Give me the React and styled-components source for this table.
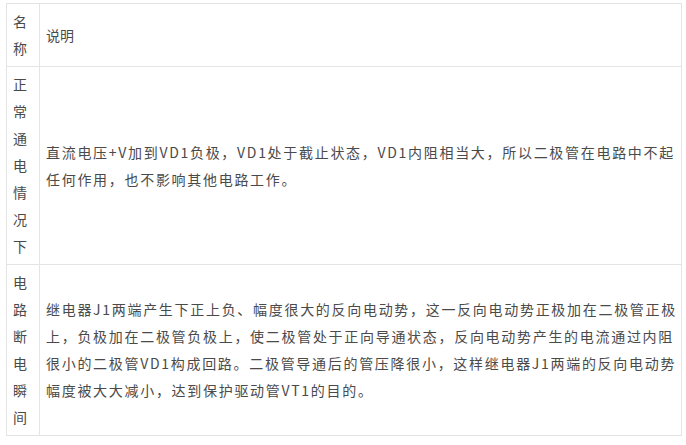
import React from 'react';
import styled, { createGlobalStyle } from 'styled-components';

const GlobalStyle = createGlobalStyle`
  html, body {
    margin: 0;
    padding: 0;
    background: #ffffff;
  }
`;

const Page = styled.div`
  width: 686px;
  height: 445px;
  padding: 3px 0 0 6px;
  box-sizing: border-box;
  background: #ffffff;
  font-family: "Noto Sans CJK SC", "Noto Sans", sans-serif;
  color: #4a4a4a;
`;

const Table = styled.table`
  width: 676px;
  border-collapse: collapse;
  table-layout: fixed;
`;

const NameCell = styled.td`
  width: 33px;
  box-sizing: border-box;
  padding: 4px 9px 4px 6px;
  border: 1px solid #e4e4e4;
  font-size: 14px;
  line-height: 27px;
  word-break: break-all;
  vertical-align: middle;
`;

const DescCell = styled.td`
  padding: 4px 4px 4px 6px;
  border: 1px solid #e4e4e4;
  font-size: 14px;
  line-height: 27px;
  letter-spacing: ${({ $spaced }) => ($spaced ? '1.7px' : '0')};
  vertical-align: middle;
  height: ${({ $height }) => $height}px;
  box-sizing: border-box;
`;

const rows = [
  { name: '名称', desc: '说明', height: 63, spaced: false },
  {
    name: '正常通电情况下',
    desc: '直流电压+V加到VD1负极，VD1处于截止状态，VD1内阻相当大，所以二极管在电路中不起任何作用，也不影响其他电路工作。',
    height: 198,
    spaced: true,
  },
  {
    name: '电路断电瞬间',
    desc: '继电器J1两端产生下正上负、幅度很大的反向电动势，这一反向电动势正极加在二极管正极上，负极加在二极管负极上，使二极管处于正向导通状态，反向电动势产生的电流通过内阻很小的二极管VD1构成回路。二极管导通后的管压降很小，这样继电器J1两端的反向电动势幅度被大大减小，达到保护驱动管VT1的目的。',
    height: 170,
    spaced: true,
  },
];

export default function App() {
  return (
    <>
      <GlobalStyle />
      <Page>
        <Table>
          <tbody>
            {rows.map(row => (
              <tr key={row.name}>
                <NameCell>{row.name}</NameCell>
                <DescCell $height={row.height} $spaced={row.spaced}>
                  {row.desc}
                </DescCell>
              </tr>
            ))}
          </tbody>
        </Table>
      </Page>
    </>
  );
}
